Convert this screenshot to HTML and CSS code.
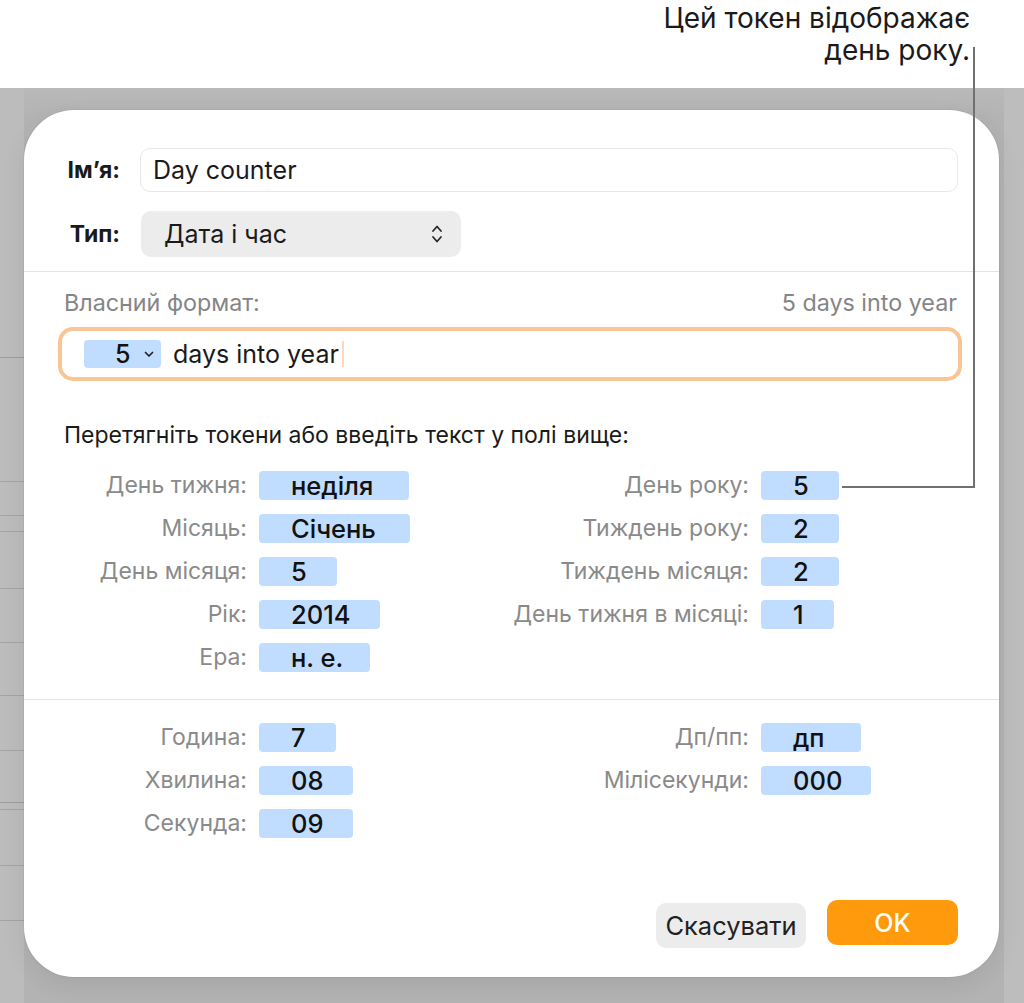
FILE: index.html
```html
<!DOCTYPE html>
<html lang="uk">
<head>
<meta charset="utf-8">
<title>Day counter</title>
<link rel="stylesheet" href="styles.css">
</head>
<body>
<div class="page">
  <header class="top">
    <p class="note">Цей токен відображає<br>день року.</p>
  </header>
  <div class="backdrop">
    <div class="dialog">
      <div class="form-row">
        <span class="flabel">Ім’я:</span>
        <div class="field">Day counter</div>
      </div>
      <div class="form-row row-type">
        <span class="flabel">Тип:</span>
        <div class="popup">
          <span>Дата і час</span>
          <svg class="updown" width="12" height="22" viewBox="0 0 12 22"><path d="M2 8 L6 3.5 L10 8 M2 14 L6 18.5 L10 14" fill="none" stroke="#2a2a2a" stroke-width="1.8" stroke-linecap="round" stroke-linejoin="round"/></svg>
        </div>
      </div>
      <div class="sep"></div>
      <div class="fmt-head"><span>Власний формат:</span><span>5 days into year</span></div>
      <div class="fmt-field">
        <span class="tok-in">5<svg class="tok-chev" width="10" height="7" viewBox="0 0 10 7"><path d="M1.5 1.5 L5 5 L8.5 1.5" fill="none" stroke="#222" stroke-width="1.7" stroke-linecap="round" stroke-linejoin="round"/></svg></span>
        <span class="fmt-text">days into year</span><span class="caret"></span>
      </div>
      <p class="hint">Перетягніть токени або введіть текст у полі вище:</p>
      <div class="groups">
        <div class="grp grp-l">
          <span class="lbl">День тижня:</span><span class="token w150">неділя</span>
          <span class="lbl">Місяць:</span><span class="token w151">Січень</span>
          <span class="lbl">День місяця:</span><span class="token w78">5</span>
          <span class="lbl">Рік:</span><span class="token w121">2014</span>
          <span class="lbl">Ера:</span><span class="token w111">н. е.</span>
        </div>
        <div class="grp grp-r">
          <span class="lbl">День року:</span><span class="token w78">5</span>
          <span class="lbl">Тиждень року:</span><span class="token w78">2</span>
          <span class="lbl">Тиждень місяця:</span><span class="token w78">2</span>
          <span class="lbl">День тижня в місяці:</span><span class="token w73">1</span>
        </div>
      </div>
      <div class="sep sep2"></div>
      <div class="groups time">
        <div class="grp grp-l">
          <span class="lbl">Година:</span><span class="token w77">7</span>
          <span class="lbl">Хвилина:</span><span class="token w94">08</span>
          <span class="lbl">Секунда:</span><span class="token w94">09</span>
        </div>
        <div class="grp grp-r">
          <span class="lbl">Дп/пп:</span><span class="token w100">дп</span>
          <span class="lbl">Мілісекунди:</span><span class="token w110">000</span>
        </div>
      </div>
      <div class="actions">
        <button class="btn cancel">Скасувати</button>
        <button class="btn ok">OK</button>
      </div>
    </div>
  </div>
  <svg class="leader" width="1024" height="1003" viewBox="0 0 1024 1003"><polyline points="974,47 974,487 842,487" fill="none" stroke="#707070" stroke-width="2"/></svg>
</div>
</body>
</html>
```

FILE: styles.css
```css
html, body {
  margin: 0;
  padding: 0;
}
body {
  font-family: "Inter", "Liberation Sans", sans-serif;
  color: #1a1a1a;
}
.page {
  position: relative;
  width: 1024px;
  height: 1003px;
  overflow: hidden;
  background: #ffffff;
}
.top {
  height: 88px;
  box-sizing: border-box;
  padding: 2px 54px 0 0;
  text-align: right;
}
.note {
  margin: 0;
  font-size: 28px;
  line-height: 32px;
  color: #1a1a1a;
}
.backdrop {
  height: 915px;
  box-sizing: border-box;
  padding: 22px 24px 0 24px;
  background:
    linear-gradient(#9e9e9e, #9e9e9e) 0 269px / 24px 1px no-repeat,
    linear-gradient(#a4a4a4, #a4a4a4) 0 393px / 24px 1px no-repeat,
    linear-gradient(#a4a4a4, #a4a4a4) 0 427px / 24px 1px no-repeat,
    linear-gradient(#a4a4a4, #a4a4a4) 0 443px / 24px 1px no-repeat,
    linear-gradient(#a4a4a4, #a4a4a4) 0 500px / 24px 1px no-repeat,
    linear-gradient(#a4a4a4, #a4a4a4) 0 554px / 24px 1px no-repeat,
    linear-gradient(#a4a4a4, #a4a4a4) 0 607px / 24px 1px no-repeat,
    linear-gradient(#a4a4a4, #a4a4a4) 0 662px / 24px 1px no-repeat,
    linear-gradient(#9e9e9e, #9e9e9e) 0 714px / 24px 1px no-repeat,
    linear-gradient(#a4a4a4, #a4a4a4) 0 721px / 24px 1px no-repeat,
    linear-gradient(#a4a4a4, #a4a4a4) 0 777px / 24px 1px no-repeat,
    linear-gradient(#a4a4a4, #a4a4a4) 0 832px / 24px 1px no-repeat,
    linear-gradient(#bcbcbc, #bcbcbc) 0 0 / 24px 100% no-repeat,
    linear-gradient(#bdbdbd, #bdbdbd) right 0 top 0 / 20px 100% no-repeat,
    linear-gradient(#b9b9b9, #b3b3b3 30px);
}
.dialog {
  width: 975px;
  height: 867px;
  box-sizing: border-box;
  background: #ffffff;
  border-radius: 50px;
  padding: 38px 41px 0 40px;
  display: flex;
  flex-direction: column;
  box-shadow: 0 0 0 1px rgba(0, 0, 0, 0.04), 0 8px 24px rgba(0, 0, 0, 0.08);
}
.form-row {
  display: flex;
  align-items: center;
  gap: 20px;
}
.row-type {
  margin-top: 19px;
}
.flabel {
  width: 56px;
  flex: none;
  text-align: right;
  font-weight: 700;
  font-size: 23px;
  line-height: 28px;
  color: #1a1a1a;
  white-space: nowrap;
}
.field {
  flex: 1;
  height: 44px;
  box-sizing: border-box;
  border: 1px solid #e8e8e8;
  border-radius: 10px;
  padding-left: 12px;
  font-size: 25px;
  display: flex;
  align-items: center;
  color: #1a1a1a;
}
.popup {
  width: 320px;
  height: 46px;
  box-sizing: border-box;
  margin-left: 1px;
  background: #ececec;
  border-radius: 10px;
  padding: 0 18px 0 23px;
  display: flex;
  align-items: center;
  justify-content: space-between;
  font-size: 25px;
  color: #1a1a1a;
}
.sep {
  margin: 14px -41px 0 -40px;
  border-top: 1px solid #e4e4e4;
}
.fmt-head {
  margin-top: 19px;
  display: flex;
  justify-content: space-between;
  font-size: 23.3px;
  line-height: 24px;
  color: #858585;
  padding-right: 1px;
}
.fmt-field {
  margin: 16px 0 0 -2px;
  height: 46px;
  box-sizing: border-box;
  border-radius: 11px;
  box-shadow: 0 0 0 4px #fac595;
  padding-left: 22px;
  display: flex;
  align-items: center;
  background: #fff;
}
.tok-in {
  width: 77px;
  height: 28px;
  box-sizing: border-box;
  padding-left: 31px;
  background: #c0dcff;
  border-radius: 4px;
  display: flex;
  align-items: center;
  font-size: 25px;
  font-weight: 500;
  color: #111;
}
.tok-chev {
  margin-left: 14px;
}
.fmt-text {
  margin-left: 12px;
  font-size: 25px;
  color: #1a1a1a;
}
.caret {
  width: 2px;
  height: 26px;
  margin-left: 3px;
  background: #fdd8b6;
}
.hint {
  margin: 46px 0 0 0;
  font-size: 23px;
  line-height: 24px;
  color: #1a1a1a;
  white-space: nowrap;
}
.groups {
  margin-top: 24px;
  display: flex;
}
.grp {
  display: grid;
  column-gap: 12px;
  row-gap: 14px;
  align-items: center;
  justify-items: start;
  align-content: start;
}
.grp-l {
  width: 436px;
  grid-template-columns: 183px auto;
}
.grp-r {
  grid-template-columns: 249px auto;
}
.lbl {
  justify-self: end;
  font-size: 23px;
  line-height: 29px;
  color: #8a8a8a;
  white-space: nowrap;
}
.token {
  height: 29px;
  line-height: 29px;
  box-sizing: border-box;
  padding: 0 0 0 32px;
  background: #c0dcff;
  border-radius: 4px;
  font-size: 25.5px;
  font-weight: 500;
  color: #111;
  white-space: nowrap;
}
.w73 { width: 73px; }
.w77 { width: 77px; }
.w78 { width: 78px; }
.w94 { width: 94px; }
.w100 { width: 100px; }
.w110 { width: 110px; }
.w111 { width: 111px; }
.w121 { width: 121px; }
.w150 { width: 150px; }
.w151 { width: 151px; }
.sep2 {
  margin-top: 27px;
}
.time {
  margin-top: 23px;
}
.actions {
  margin-top: auto;
  padding-bottom: 29px;
  display: flex;
  justify-content: flex-end;
  align-items: flex-end;
  gap: 21px;
}
.btn {
  font-family: inherit;
  font-size: 25.5px;
  border: none;
  border-radius: 10px;
  height: 45px;
  padding: 0;
  cursor: default;
}
.cancel {
  width: 150px;
  background: #ececec;
  color: #222;
}
.ok {
  width: 131px;
  margin-bottom: 3px;
  background: #ff9a0c;
  color: #fff;
  font-size: 25px;
  font-weight: 500;
}
.leader {
  position: absolute;
  left: 0;
  top: 0;
  pointer-events: none;
}
```
